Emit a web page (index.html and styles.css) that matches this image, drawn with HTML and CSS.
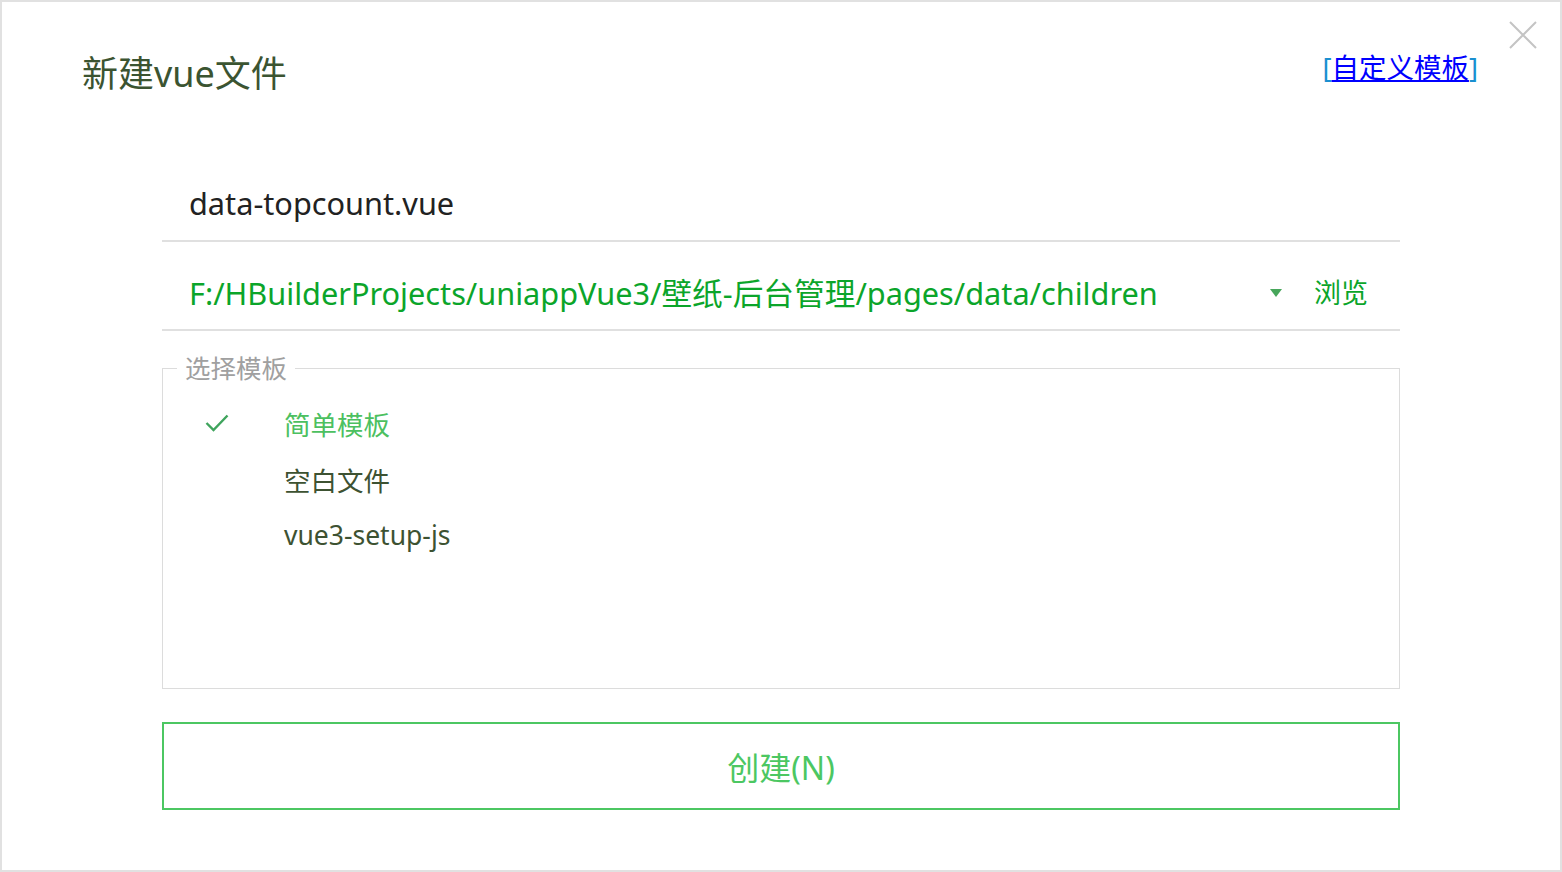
FILE: index.html
```html
<!DOCTYPE html>
<html lang="zh-CN">
<head>
    <meta charset="UTF-8">
    <meta name="viewport" content="width=device-width, initial-scale=1.0">
    <title>新建vue文件</title>
    <link rel="stylesheet" href="styles.css">
</head>
<body>
    <div class="dialog">
        <div class="close" title="关闭">
            <svg width="28" height="28" viewBox="0 0 28 28">
                <path d="M1 1 L27 27 M27 1 L1 27" stroke="#c4c4c4" stroke-width="2" fill="none"/>
            </svg>
        </div>

        <div class="header">
            <h1 class="title">新建vue文件</h1>
            <span class="custom"><span class="bracket">[</span><a href="#">自定义模板</a><span class="bracket">]</span></span>
        </div>

        <form class="form" id="new-file-form">
            <div class="field">
                <input class="name-input" type="text" value="data-topcount.vue">
            </div>

            <div class="field path-field">
                <span class="path">F:/HBuilderProjects/uniappVue3/壁纸-后台管理/pages/data/children</span>
                <span class="caret"></span>
                <span class="browse">浏览</span>
            </div>

            <fieldset class="templates">
                <legend>选择模板</legend>
                <ul class="template-list">
                    <li class="template selected">
                        <span class="check">
                            <svg width="24" height="18" viewBox="0 0 24 18">
                                <path d="M1.5 9 L8.5 16 L22.5 1.5" stroke="#3fa45d" stroke-width="2.4" fill="none"/>
                            </svg>
                        </span>
                        简单模板
                    </li>
                    <li class="template"><span class="check"></span>空白文件</li>
                    <li class="template"><span class="check"></span>vue3-setup-js</li>
                </ul>
            </fieldset>

            <button type="submit" class="create">创建(N)</button>
        </form>
    </div>
</body>
</html>
```

FILE: styles.css
```css
body {
    margin: 0;
    background-color: #fff;
    font-family: "Noto Sans", "Noto Sans CJK SC", sans-serif;
}
.dialog {
    position: relative;
    width: 1562px;
    height: 872px;
    box-sizing: border-box;
    border: 2px solid #e1e1e1;
    background-color: #fff;
}
.close {
    position: absolute;
    top: 19px;
    right: 23px;
    width: 28px;
    height: 28px;
    cursor: pointer;
}
.close svg {
    display: block;
}
.header {
    display: flex;
    justify-content: space-between;
    align-items: center;
    padding: 48px 82px 0 80px;
    height: 48px;
}
.title {
    margin: 0;
    font-size: 36px;
    font-weight: normal;
    line-height: 48px;
    color: #3b5431;
}
.custom {
    font-size: 27.5px;
    line-height: 36px;
    margin-top: -12px;
}
.custom .bracket {
    color: #1a8fd0;
}
.custom a {
    color: #0000ff;
    text-decoration: underline;
}
.form {
    width: 1238px;
    margin: 56px 0 0 160px;
}
.field {
    display: flex;
    align-items: flex-end;
    height: 88px;
    box-sizing: border-box;
    padding: 0 32px 17px 27px;
    border-bottom: 2px solid #e0e0e0;
}
.name-input {
    width: 100%;
    padding: 0;
    border: none;
    outline: none;
    font-family: inherit;
    font-size: 30.7px;
    line-height: 40px;
    height: 40px;
    color: #222;
    background: transparent;
}
.path-field {
    height: 89px;
    padding-bottom: 16px;
}
.path {
    flex: 1;
    font-size: 30.7px;
    line-height: 40px;
    color: #0ba52a;
    white-space: nowrap;
}
.caret {
    width: 0;
    height: 0;
    border-left: 6px solid transparent;
    border-right: 6px solid transparent;
    border-top: 8px solid #47a65b;
    margin: 0 32px 16px 0;
}
.browse {
    font-size: 27px;
    line-height: 40px;
    color: #0ba52a;
}
.templates {
    margin: 25px 0 0 0;
    padding: 0;
    border: 1px solid #dcdcdc;
    min-width: 0;
}
.templates legend {
    margin-left: 14px;
    padding: 0 8px;
    font-size: 25.5px;
    line-height: 24px;
    color: #a0a0a0;
}
.template-list {
    list-style: none;
    margin: 0;
    padding: 15px 0 0 0;
    height: 308px;
    box-sizing: border-box;
}
.template {
    display: flex;
    align-items: center;
    height: 56px;
    font-size: 26.5px;
    color: #3d5232;
}
.template.selected {
    color: #4cc060;
}
.check {
    width: 79px;
    padding-left: 42px;
    display: flex;
    align-items: center;
}
.check svg {
    display: block;
}
.create {
    display: block;
    width: 100%;
    height: 88px;
    margin-top: 33px;
    background-color: #fff;
    border: 2px solid #4cc762;
    color: #4cc762;
    font-family: inherit;
    font-size: 32px;
    cursor: pointer;
}
```
